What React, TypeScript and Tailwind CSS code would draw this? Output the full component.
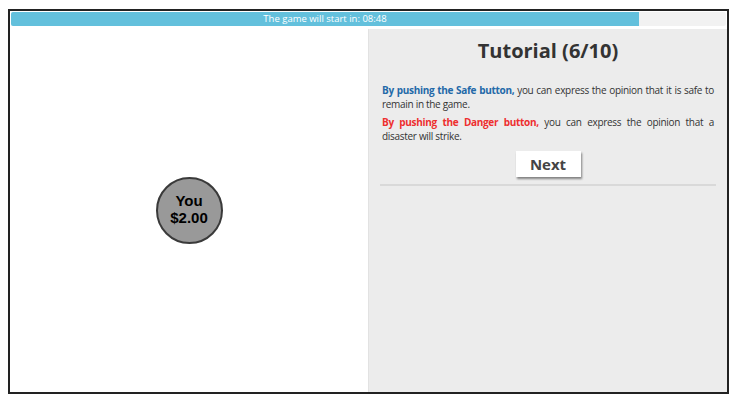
export default function App() {
  return (
    <div className="h-[403px] w-[739px] bg-white pl-[8px] pt-[9px]" style={{ fontFamily: '"Open Sans", sans-serif' }}>
      <div className="flex h-[385px] w-[721px] flex-col border-2 border-[#222]">
        {/* Countdown bar */}
        <div className="mx-[1px] mt-[1px] h-[14px] overflow-hidden rounded-[2px] bg-[#f2f2f2]">
          <div className="flex h-full w-[628px] items-center justify-center bg-[#63c0dc] text-[9.5px] leading-none text-white">
            The game will start in: 08:48
          </div>
        </div>

        <div className="mt-[3px] flex flex-1">
          {/* Player area */}
          <div className="flex w-[358px] items-center justify-center bg-white">
            <div
              className="flex h-[67px] w-[67px] flex-col items-center justify-center rounded-full border-2 border-[#3a3a3a] bg-[#999] pb-[3px] text-[15px] font-bold leading-[17px] text-black"
              style={{ fontFamily: '"Liberation Sans", Arial, sans-serif' }}
            >
              <span>You</span>
              <span>$2.00</span>
            </div>
          </div>

          {/* Tutorial panel */}
          <div className="flex flex-1 flex-col border-l border-[#e2e2e2] bg-[#ececec] px-[11px]">
            <h1 className="mt-[9px] text-center text-[20px] font-bold leading-[26px] text-[#333]">Tutorial (6/10)</h1>
            <div className="mx-[2px] mt-[19px] text-[10px] leading-[14px] tracking-[-0.3px] text-[#333]">
              <p className="whitespace-nowrap text-justify [text-align-last:justify]">
                <span className="font-bold text-[#2369a8]">By pushing the Safe button,</span> you can express the
                opinion that it is safe to
              </p>
              <p>remain in the game.</p>
            </div>
            <div className="mx-[2px] mt-[4px] text-[10px] leading-[14px] tracking-[-0.3px] text-[#333]">
              <p className="whitespace-nowrap text-justify [text-align-last:justify]">
                <span className="font-bold text-[#ee2f2f]">By pushing the Danger button,</span> you can express the
                opinion that a
              </p>
              <p>disaster will strike.</p>
            </div>
            <div className="mt-[8px] flex justify-center">
              <button className="h-[26px] w-[65px] bg-white text-[15px] font-bold text-[#444] shadow-[1px_2px_2px_rgba(0,0,0,0.45)]">
                Next
              </button>
            </div>
            <div className="mt-[7px] h-[2px] bg-[#d9d9d9]" />
          </div>
        </div>
      </div>
    </div>
  );
}
